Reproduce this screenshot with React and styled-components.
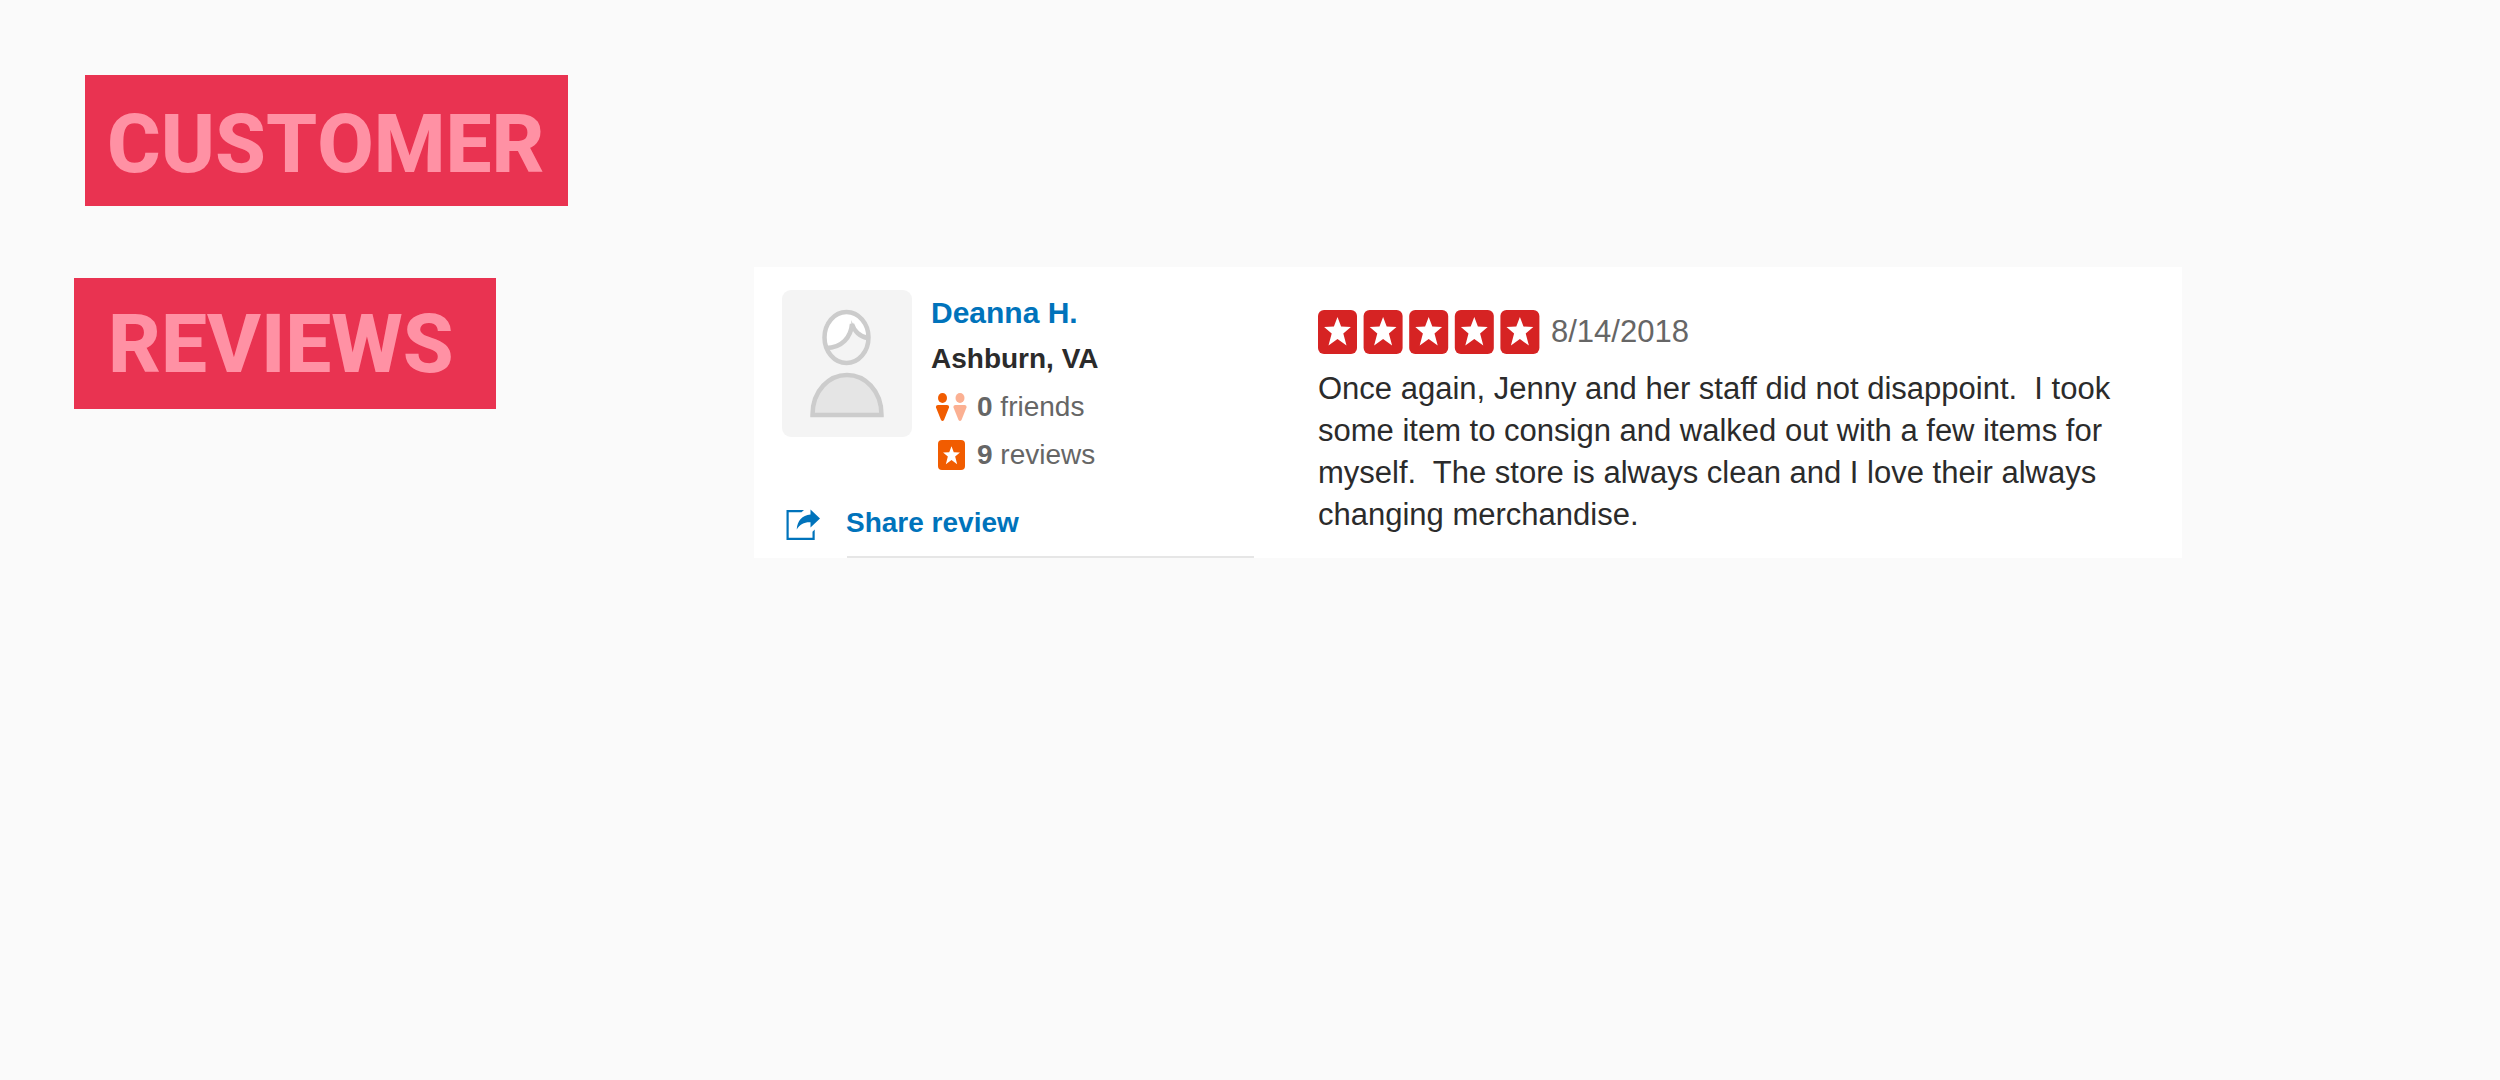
import styled, { createGlobalStyle } from "styled-components";

const GlobalStyle = createGlobalStyle`
  * {
    box-sizing: border-box;
  }

  body {
    margin: 0;
    background: #fafafa;
    font-family: "Liberation Sans", Arial, sans-serif;
  }
`;

const Page = styled.main`
  display: grid;
  grid-template-columns: 680fr 1428fr 318fr;
  align-items: start;
  padding: 75px 0 75px 74px;
`;

const Title = styled.h1`
  display: flex;
  flex-direction: column;
  align-items: flex-start;
  gap: 72px;
  margin: 0;
  font: 800 82px/95px Roboto, sans-serif;
  font-kerning: none;
  color: #ff91a4;
`;

const TitleWord = styled.span`
  height: 131px;
  margin-left: ${({ $indent }) => $indent}px;
  padding: ${({ $padding }) => $padding};
  background: #e93351;
`;

const Card = styled.article`
  display: grid;
  grid-template-columns: 536fr 864fr;
  min-height: 291px;
  margin-top: 192px;
  padding-left: 28px;
  background: #ffffff;
`;

const Author = styled.div`
  display: flex;
  flex-direction: column;
  padding-top: 23px;
`;

const Profile = styled.div`
  display: flex;
  gap: 19px;
`;

const Details = styled.div`
  display: flex;
  flex-direction: column;
  padding-top: 1px;
  font-size: 28px;
  line-height: 48px;
  white-space: nowrap;
`;

const Name = styled.a`
  font-size: 30px;
  font-weight: 700;
  line-height: 44px;
  color: #0073bb;
  text-decoration: none;
`;

const Place = styled.span`
  font-weight: 700;
  color: #2b2b2b;
`;

const Stat = styled.span`
  display: flex;
  align-items: center;
  gap: 10px;
  padding-left: 1px;
  color: #666666;
`;

const Share = styled.button`
  display: flex;
  align-items: center;
  gap: 25px;
  margin: 20px 0 0;
  padding: 0 0 0 3px;
  border: 0;
  background: none;
  font: inherit;
  font-size: 28px;
  font-weight: 700;
  line-height: 48px;
  color: #0073bb;
  cursor: pointer;
`;

const Divider = styled.hr`
  width: 407px;
  height: 2px;
  margin: auto 0 0 65px;
  border: 0;
  background: #e6e6e6;
`;

const Review = styled.div`
  padding-top: 43px;
`;

const Rating = styled.div`
  display: flex;
  align-items: center;
  gap: 11px;
  margin-bottom: 14px;
  font-size: 31px;
  line-height: 44px;
  color: #666666;
`;

const Text = styled.p`
  margin: 0;
  font-size: 31px;
  line-height: 42px;
  color: #2b2b2b;
  white-space: pre-line;
`;

const STAR = "M0-14 3.6-4.4 13.4-4 5.8 2.4 9 14.6 0 8-9 14.6-5.8 2.4-13.4-4-3.6-4.4Z";

const Avatar = () => (
  <svg width="130" height="147" viewBox="0 0 130 147" role="img" aria-label="Deanna H.">
    <rect width="130" height="147" rx="9" fill="#f4f4f4" />
    <path d="M43 57C36 34 50 21 64 21c12 0 23 10 23 27-8-2-13-8-16-16-2 15-12 26-28 25Z" fill="#fff" />
    <g fill="none" stroke="#cccccc" strokeWidth="4.5">
      <ellipse cx="64.500" cy="47.500" rx="22" ry="25.500" />
      <path d="M44 58c16 0 25-11 26-24 2 7 8 13 16 14" />
      <path d="M30.500 125c0-25 17-40 34.500-40s34.500 15 34.500 40Z" fill="#e5e5e5" />
    </g>
    <path d="M69 30l1 9 3-1Z" fill="#cccccc" />
  </svg>
);

const FriendsIcon = () => (
  <svg width="35" height="28" viewBox="0 0 35 28" aria-hidden="true">
    <g fill="#f15c00">
      <ellipse cx="10.500" cy="5" rx="4.500" ry="5" />
      <path d="M6 12h9q2.500 0 2 2.500L12 27q-1.500 2-3 0L4 14.500Q3.500 12 6 12Z" />
    </g>
    <g fill="#fbb092">
      <ellipse cx="28" cy="5" rx="4.500" ry="5" />
      <path d="M23.500 12h9q2.500 0 2 2.500L29.500 27q-1.500 2-3 0l-5-12.500Q21 12 23.500 12Z" />
    </g>
  </svg>
);

const ReviewsIcon = () => (
  <svg width="35" height="30" viewBox="0 0 35 30" aria-hidden="true">
    <rect x="6" width="27" height="30" rx="4" fill="#f15c00" />
    <path d={STAR} transform="translate(19.500 15) scale(.63)" fill="#fff" />
  </svg>
);

const ShareIcon = () => (
  <svg width="36" height="36" viewBox="0 -5 36 36" fill="#0073bb" aria-hidden="true">
    <path d="M1.500 0h17.500l-2.500 2.200H3.700v25.600h23.800v-6l2.200-2.300V30H1.500Z" />
    <path d="M25.500-.5 35 8.500l-9.500 9v-5.200C19.500 12 15 14 11.700 19.500 12.500 10.500 17 5.500 25.500 4.500Z" />
  </svg>
);

const Stars = () => (
  <svg width="222" height="44" viewBox="0 0 222 44" role="img" aria-label="5 stars">
    {[0, 1, 2, 3, 4].map((i) => (
      <g key={i} transform={`translate(${i * 45.6} 0)`}>
        <rect width="39" height="44" rx="6" fill="#d62323" />
        <path d={STAR} transform="translate(19.500 21)" fill="#fff" />
      </g>
    ))}
  </svg>
);

const App = () => {
  return (
    <>
      <GlobalStyle />
      <Page>
        <Title>
          <TitleWord $indent={11} $padding="22px 23px 14px 22px">CUSTOMER</TitleWord>
          <TitleWord $indent={0} $padding="19px 42px 17px 34px">REVIEWS</TitleWord>
        </Title>
        <Card>
          <Author>
            <Profile>
              <Avatar />
              <Details>
                <Name href="#">Deanna H.</Name>
                <Place>Ashburn, VA</Place>
                <Stat>
                  <FriendsIcon />
                  <span>
                    <b>0</b> friends
                  </span>
                </Stat>
                <Stat>
                  <ReviewsIcon />
                  <span>
                    <b>9</b> reviews
                  </span>
                </Stat>
              </Details>
            </Profile>
            <Share type="button">
              <ShareIcon />
              Share review
            </Share>
            <Divider />
          </Author>
          <Review>
            <Rating>
              <Stars />
              <time dateTime="2018-08-14">8/14/2018</time>
            </Rating>
            <Text>
              {"Once again, Jenny and her staff did not disappoint.\u00a0 I took\n"}
              {"some item to consign and walked out with a few items for\n"}
              {"myself.\u00a0 The store is always clean and I love their always\n"}
              {"changing merchandise."}
            </Text>
          </Review>
        </Card>
      </Page>
    </>
  );
};

export default App;
